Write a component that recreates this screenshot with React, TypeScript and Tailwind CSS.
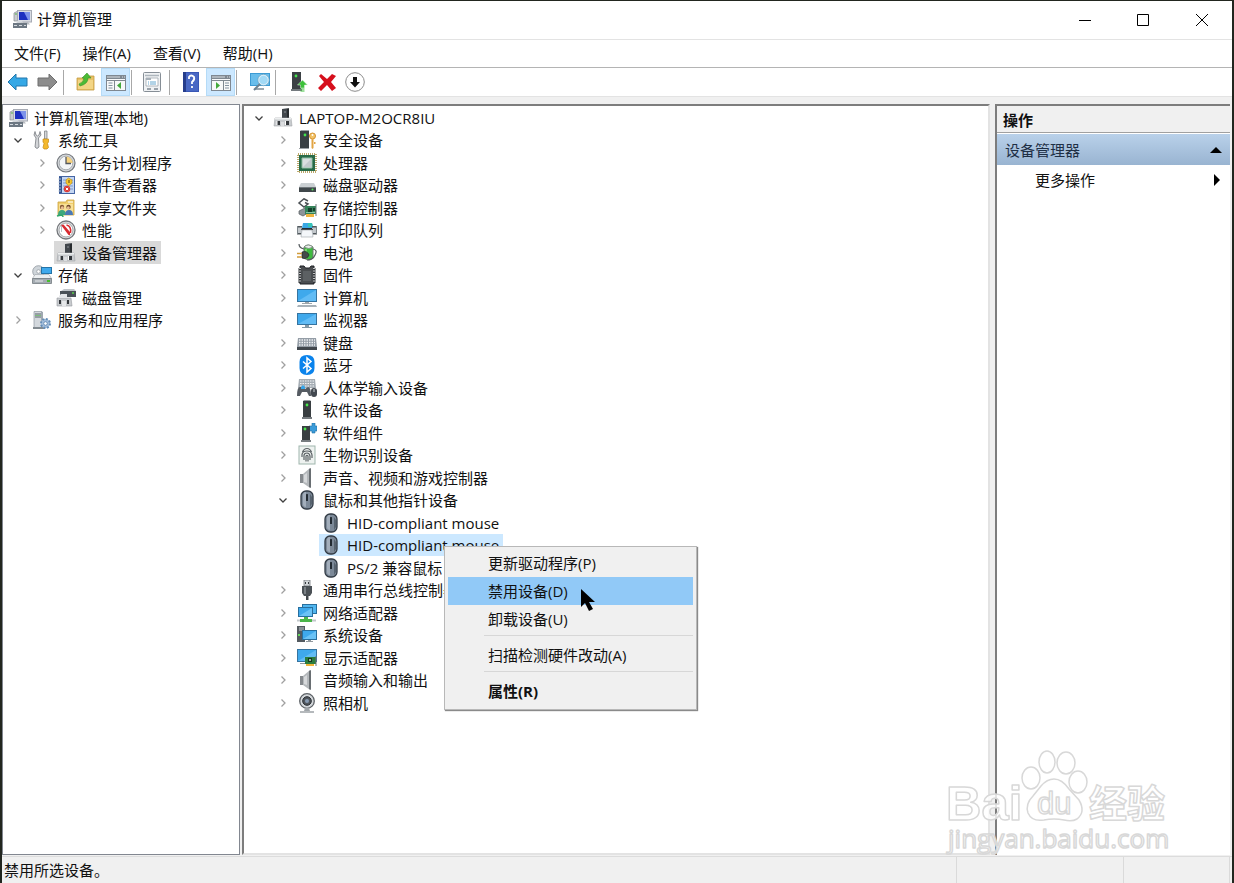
import React from "react";

type TreeNode = {
  label: string;
  icon: string;
  level: number;
  state?: "open" | "closed" | "leaf";
  selected?: "gray" | "blue";
};

const consoleTree: TreeNode[] = [
  { label: "计算机管理(本地)", icon: "console", level: 0 },
  { label: "系统工具", icon: "tools", level: 1, state: "open" },
  { label: "任务计划程序", icon: "clock", level: 2, state: "closed" },
  { label: "事件查看器", icon: "eventLog", level: 2, state: "closed" },
  { label: "共享文件夹", icon: "sharedFolder", level: 2, state: "closed" },
  { label: "性能", icon: "gauge", level: 2, state: "closed" },
  { label: "设备管理器", icon: "deviceManager", level: 2, state: "leaf", selected: "gray" },
  { label: "存储", icon: "storage", level: 1, state: "open" },
  { label: "磁盘管理", icon: "diskManagement", level: 2, state: "leaf" },
  { label: "服务和应用程序", icon: "services", level: 1, state: "closed" },
];

const deviceTree: TreeNode[] = [
  { label: "LAPTOP-M2OCR8IU", icon: "deviceManager", level: 1, state: "open" },
  { label: "安全设备", icon: "security", level: 2, state: "closed" },
  { label: "处理器", icon: "cpu", level: 2, state: "closed" },
  { label: "磁盘驱动器", icon: "disk", level: 2, state: "closed" },
  { label: "存储控制器", icon: "storageController", level: 2, state: "closed" },
  { label: "打印队列", icon: "printer", level: 2, state: "closed" },
  { label: "电池", icon: "battery", level: 2, state: "closed" },
  { label: "固件", icon: "firmware", level: 2, state: "closed" },
  { label: "计算机", icon: "computer", level: 2, state: "closed" },
  { label: "监视器", icon: "monitor", level: 2, state: "closed" },
  { label: "键盘", icon: "keyboard", level: 2, state: "closed" },
  { label: "蓝牙", icon: "bluetooth", level: 2, state: "closed" },
  { label: "人体学输入设备", icon: "hid", level: 2, state: "closed" },
  { label: "软件设备", icon: "software", level: 2, state: "closed" },
  { label: "软件组件", icon: "component", level: 2, state: "closed" },
  { label: "生物识别设备", icon: "fingerprint", level: 2, state: "closed" },
  { label: "声音、视频和游戏控制器", icon: "speaker", level: 2, state: "closed" },
  { label: "鼠标和其他指针设备", icon: "mouse", level: 2, state: "open" },
  { label: "HID-compliant mouse", icon: "mouse", level: 3, state: "leaf" },
  { label: "HID-compliant mouse", icon: "mouse", level: 3, state: "leaf", selected: "blue" },
  { label: "PS/2 兼容鼠标", icon: "mouse", level: 3, state: "leaf" },
  { label: "通用串行总线控制器", icon: "usb", level: 2, state: "closed" },
  { label: "网络适配器", icon: "network", level: 2, state: "closed" },
  { label: "系统设备", icon: "system", level: 2, state: "closed" },
  { label: "显示适配器", icon: "display", level: 2, state: "closed" },
  { label: "音频输入和输出", icon: "speaker", level: 2, state: "closed" },
  { label: "照相机", icon: "camera", level: 2, state: "closed" },
];

const screenBlue = "#3fa9ec";

const icons: Record<string, React.ReactNode> = {
  console: (
    <>
      <path d="M2 4l4-2v10H2z" fill="#c9ccd0" stroke="#85898e" strokeWidth=".7" />
      <path d="M3 5h2" stroke="#55b24a" />
      <rect x="5.500" y="1.500" width="14" height="11.500" fill="#d9dce3" stroke="#a7abb4" />
      <path d="M7 3h11v8H7z" fill="#1c2fc0" />
      <path d="M12 3h6v8h-2z" fill="#7d93ea" />
      <path d="M9 13h7l2 2.500H8z" fill="#b8bcc2" />
      <path d="M1 14h14v5H1z" fill="#6d7883" />
      <path d="M5 14v-1.500h5V14M2 16.500h3m2 0h3m2 0h2" stroke="#d5dadf" fill="none" />
    </>
  ),
  tools: (
    <>
      <path d="M3 1.500L2 5l2 3-1 9q2 3 4 0L6.500 8 9 5 8 1.500 7 5 5.500 6 4 5z" fill="#d3d5d8" stroke="#777b80" strokeWidth=".8" />
      <path d="M12.500 1h2.500v8h-2.500z" fill="#d5d7d9" stroke="#74777b" strokeWidth=".7" />
      <path d="M11 9h5.500v3l-1 1.500 1 4-1.500 1.500h-3l-1-1.500 1-4-1-1.500z" fill="#f4b92d" stroke="#c68a14" strokeWidth=".7" />
    </>
  ),
  clock: (
    <>
      <circle cx="10" cy="10" r="9" fill="#d4d7da" stroke="#73777c" strokeWidth="1.200" />
      <circle cx="10" cy="10" r="6.800" fill="#f4f6f8" stroke="#9aa0a5" strokeWidth=".8" />
      <path d="M10 10V3.500A6.500 6.500 0 0116.500 10z" fill="#f6d27e" />
      <path d="M10 4v6.500h5" stroke="#54585d" fill="none" strokeWidth="1.300" />
    </>
  ),
  eventLog: (
    <>
      <rect x="3.500" y="1.500" width="15" height="17" fill="#c4d6f2" stroke="#4565a4" />
      <path d="M3 2h3v16H3z" fill="#35558f" />
      <path d="M2 4h3M2 7h3M2 10h3M2 13h3M2 16h3" stroke="#cbd5e6" strokeWidth=".8" />
      <path d="M7 5h10M7 8h10M7 11h10M7 14h10" stroke="#7c99cf" />
      <path d="M12.500 3l3.500 2v3l-3.500 3L10 8V5z" fill="#f6c62e" stroke="#b98c16" strokeWidth=".6" />
      <path d="M13 5v3" stroke="#5a4710" />
      <circle cx="11" cy="14" r="3.200" fill="#dc3b36" />
      <path d="M9.800 12.800l2.400 2.400m0-2.400l-2.400 2.400" stroke="#fff" />
    </>
  ),
  sharedFolder: (
    <>
      <path d="M2 4h8l1-2h7v15H2z" fill="#f0ce6d" stroke="#cba23c" strokeWidth=".8" />
      <path d="M3 6h14v10H3z" fill="#f9e197" />
      <path d="M12 4h5" stroke="#fff" />
      <circle cx="6" cy="9" r="2.200" fill="#8a5a34" />
      <circle cx="6.300" cy="9.700" r="1.500" fill="#e8bd94" />
      <path d="M2 17q0-5 4-5t4 5z" fill="#3da87d" />
      <circle cx="12.500" cy="9" r="2.200" fill="#6c4427" />
      <circle cx="12.300" cy="9.700" r="1.500" fill="#e8bd94" />
      <path d="M9 17q0-5 4-5t4 5z" fill="#4a79b5" />
      <path d="M1 18q6-2 6 1" stroke="#2fa568" fill="none" strokeWidth="1.500" />
    </>
  ),
  gauge: (
    <>
      <circle cx="10" cy="10" r="9" fill="#e2e4e6" stroke="#74777b" strokeWidth="1.300" />
      <circle cx="10" cy="10" r="7" fill="#fff" stroke="#8e9296" strokeWidth=".8" />
      <path d="M5.500 12V6" fill="none" stroke="#b9bec3" />
      <path d="M5 5l2.500-.5L14 12v3h-1.500z" fill="#d82a30" />
      <path d="M10.500 5q5 1 4 8" stroke="#d82a30" strokeWidth="1.500" fill="none" />
    </>
  ),
  deviceManager: (
    <>
      <path d="M9 1l7-1v10H9z" fill="#42474c" />
      <path d="M14 1h2v9h-2z" fill="#272b2e" />
      <path d="M11 4h2" stroke="#8d9398" />
      <path d="M2 10h16l1 8H1z" fill="#c8cbce" stroke="#a2a6aa" strokeWidth=".6" />
      <path d="M2 10h16v1.500H2z" fill="#eceeef" />
      <path d="M4 13h3v4H4zm9 0h3v4h-3z" fill="#34383c" />
      <path d="M3.500 13h1v4h-1zm8.500 0h1v4h-1z" fill="#fff" />
      <path d="M8 14h3v4H8z" fill="#dcdee0" />
    </>
  ),
  storage: (
    <>
      <circle cx="6.500" cy="6.500" r="5.800" fill="#cfd5da" stroke="#8e969d" strokeWidth=".8" />
      <circle cx="6.500" cy="6.500" r="1.800" fill="#fff" stroke="#8e969d" strokeWidth=".7" />
      <rect x="9.500" y="2.500" width="10" height="6" fill={screenBlue} stroke="#2474a8" />
      <path d="M3 9.500h14l2.500 4H.5z" fill="#eceff1" stroke="#9da3a8" strokeWidth=".6" />
      <path d="M.5 13.500h19v5H.5z" fill="#a5acb2" stroke="#747b81" strokeWidth=".8" />
      <path d="M15 15h3v2h-3z" fill="#48bd2d" />
      <path d="M3 16h8" stroke="#e8ebed" />
    </>
  ),
  diskManagement: (
    <>
      <path d="M5 3l3-2h10l2 2z" fill="#bfc4c8" />
      <path d="M4 3h16v6H4z" fill="#4a5157" />
      <path d="M16 5h2" stroke="#58cf49" strokeWidth="1.500" />
      <path d="M1 10h14l1 8H1z" fill="#c8cbce" stroke="#95999d" strokeWidth=".6" />
      <path d="M3 12h2v4H3zm8 0h2v4h-2z" fill="#34383c" />
      <path d="M3 8l2-2h6v4H3z" fill="#e4e6e8" />
      <path d="M6 13h4v5H6z" fill="#e6e8ea" />
    </>
  ),
  services: (
    <>
      <path d="M2 1.500h8v16H2z" fill="#d3d8dd" stroke="#9199a0" strokeWidth=".7" />
      <path d="M9 2h2v16H9z" fill="#9fa8b0" />
      <path d="M3 4h6M3 7h6" stroke="#59626a" />
      <path d="M3 5.500h6" stroke="#58b252" strokeWidth=".7" />
      <path d="M1 18h11" stroke="#838b91" strokeWidth="2" />
      <circle cx="13.500" cy="13.500" r="4.500" fill="#a5bfdd" stroke="#658eb8" strokeWidth="2" strokeDasharray="2 1.500" />
      <circle cx="13.500" cy="13.500" r="1.800" fill="#fff" stroke="#557fa9" strokeWidth=".8" />
    </>
  ),
  security: (
    <>
      <path d="M3 1h9v17H3z" fill="#393f43" />
      <path d="M3 1l1-1h8v1zM2 18h10v1H2z" fill="#9ca1a5" />
      <circle cx="8" cy="5" r="1.400" fill="#43e44d" />
      <circle cx="15.500" cy="6" r="3" fill="#f3c468" stroke="#d59331" />
      <path d="M14.500 9h2v9l-1 1-1-1zM17 12h1.500v2H17z" fill="#e2a544" />
      <circle cx="15.500" cy="5" r=".9" fill="#fff" />
    </>
  ),
  cpu: (
    <>
      <rect x="1" y="1" width="18" height="18" fill="none" stroke="#a68d3d" strokeWidth="1.500" strokeDasharray="1 1" />
      <path d="M2 2h16v16H2z" fill="#286b48" />
      <path d="M5 5h10v10H5z" fill="#dadee0" stroke="#8ebba0" />
      <path d="M6 14L14 6v8z" fill="#c2c9cc" />
    </>
  ),
  disk: (
    <>
      <path d="M4 8h13l2 4H2z" fill="#cbd0d3" />
      <path d="M2 12h17v5H2z" fill="#40474b" />
      <path d="M2 12h17v1H2z" fill="#70777b" />
      <circle cx="15.500" cy="14.500" r="1" fill="#55e55b" />
    </>
  ),
  storageController: (
    <>
      <path d="M11 3L7 .8 2 5l5 4 4-3-3-1.500" stroke="#4b5054" strokeWidth="1.500" fill="none" />
      <path d="M2 13l6-3 3 5-5 3-4-2z" fill="#8d9499" stroke="#54595d" strokeWidth=".7" />
      <path d="M8 8h11v8H8z" fill="#35845a" />
      <path d="M11 10h4v4h-4zm5 0h2v3h-2z" fill="#163f2c" />
      <path d="M9 14.500h9" stroke="#8ac4a4" />
      <path d="M9 16h8v3H9z" fill="#efb540" />
      <path d="M19 6v12" stroke="#717a7f" />
    </>
  ),
  printer: (
    <>
      <path d="M6 3h9l1 5H5z" fill="#39a7e4" />
      <path d="M11 3h4l1 4h-5z" fill="#37c3b7" />
      <path d="M1 6h4v3h11V6h3v8H1z" fill="#c3c8cc" />
      <path d="M0 6h5v1.500H0zm15 0h5v1.500h-5zM0 13h4v1.500H0zm16 0h4v1.500h-4z" fill="#51585d" />
      <path d="M0 6h1v8H0zm19 0h1v8h-1z" fill="#7d858a" />
      <path d="M4 10h12l-1-2H5z" fill="#252b2f" />
      <path d="M5 10h10l1 7H4z" fill="#f4f7fa" stroke="#9da5aa" strokeWidth=".6" />
    </>
  ),
  battery: (
    <>
      <path d="M7 4q4-4 9 0v11q-4 4-9 0z" fill="#3eba3f" stroke="#6f7b72" />
      <path d="M7 4q4-4 9 0-4 3-9 0" fill="#e9eeeb" stroke="#6f7b72" strokeWidth=".7" />
      <path d="M9 6v10" stroke="#b5ef9e" />
      <path d="M2 1q0 4 5 5M16 6q5 1 2 6-2 5-8 5" stroke="#555b5e" strokeWidth="1.200" fill="none" />
      <path d="M5 9q5-2 7 3-2 5-7 3z" fill="#454a4a" stroke="#232626" strokeWidth=".7" />
      <path d="M0 10.500h5M0 14h5" stroke="#d19c3b" strokeWidth="1.700" />
    </>
  ),
  firmware: (
    <>
      <path d="M3 1h4l1.500 2h4L14 1h3v18H3z" fill="#4a4d50" stroke="#202326" strokeWidth="1" />
      <path d="M2.500 3v15M17.500 3v15" stroke="#33373a" strokeWidth="2" />
      <path d="M3 3v15M17 3v15" stroke="#f3f3f3" strokeWidth="1.500" strokeDasharray="1 1.500" />
      <path d="M6 6h8v10H6z" fill="#5c6063" />
    </>
  ),
  computer: (
    <>
      <rect x=".5" y="1.500" width="19" height="12" fill={screenBlue} stroke="#3674a0" />
      <path d="M1 13L19 2v11z" fill="#62bcf5" />
      <path d="M8 14h4v1h3v1H5v-1h3z" fill="#a0a7ab" />
      <path d="M1 17h18l1 2H0z" fill="#a8b2b9" />
    </>
  ),
  monitor: (
    <>
      <rect x=".5" y="3.500" width="19" height="11" fill={screenBlue} stroke="#3674a0" />
      <path d="M1 14L19 4v10z" fill="#62bcf5" />
      <path d="M8 15h4v2h3v1H5v-1h3z" fill="#8499a6" />
    </>
  ),
  keyboard: (
    <>
      <path d="M1 5h18l1 9H0z" fill="#949da6" />
      <path d="M2 7h16M2 9.500h16M2 12h16" stroke="#edf0f3" strokeWidth="1.300" strokeDasharray="1.500 1" />
      <path d="M0 14h20v3H0z" fill="#41474d" />
    </>
  ),
  bluetooth: (
    <>
      <path d="M10 0q7.500 0 7.500 7v6q0 7-7.500 7t-7.500-7V7q0-7 7.500-7" fill="#0a83ec" />
      <path d="M6 6.500l8 7-4 3.500V3l4 3.500-8 7" stroke="#fff" strokeWidth="1.500" fill="none" />
    </>
  ),
  hid: (
    <>
      <path d="M2 1h16l1 9H1z" fill="#a5adb4" />
      <path d="M3 3h14M3 5.500h14M3 8h14" stroke="#f0f2f4" strokeDasharray="1.500 1" />
      <path d="M0 18q0-9 3-9h3l2 2 3-2q3 0 3 9h-2l-2-4H5l-2 4z" fill="#555b62" />
      <path d="M4 9l2-2 2 2v2H4z" fill="#37a5e8" />
      <rect x="14" y="10" width="6" height="9" rx="3" fill="#42484f" />
      <path d="M17 11v3" stroke="#cbd2d8" />
    </>
  ),
  software: (
    <>
      <path d="M6 1h8v16H6z" fill="#393e41" />
      <path d="M5 17h10v2H5z" fill="#777c80" />
      <path d="M6 1l1-1h6l1 1z" fill="#969b9d" />
      <circle cx="10" cy="5" r="1.400" fill="#48e84c" />
    </>
  ),
  component: (
    <>
      <path d="M12 3h3V0h3v3h2v5h-2v2h-3V8h-3z" fill="#3b9bd9" stroke="#2472a6" strokeWidth=".6" />
      <path d="M5 3h8v14H5z" fill="#393e41" />
      <path d="M4 17h10v2H4z" fill="#777c80" />
      <circle cx="8" cy="6" r="1.400" fill="#48e84c" />
    </>
  ),
  fingerprint: (
    <>
      <rect x="2" y="1" width="16" height="18" fill="#eef2f0" stroke="#9fb6ad" />
      <path
        d="M5.500 7Q7 3.500 10 3.500T14.500 7M5 12V9.500Q5.500 6 10 6t5 4v3M7 15V10q.5-2 3-2t3 3v4M9 16.500V11q1-1.500 2 0v5.500"
        fill="none"
        stroke="#595f63"
        strokeWidth="1.200"
      />
    </>
  ),
  speaker: (
    <>
      <path d="M3 6h4v9H3z" fill="#85898d" />
      <path d="M6 6l7-6v20l-7-5z" fill="#b4b8bb" />
      <path d="M12 1l2-1v20l-2-1z" fill="#696e72" />
      <path d="M7 7l3-2v10l-3-1z" fill="#d7d9db" />
    </>
  ),
  mouse: (
    <>
      <rect x="4" y="1" width="12" height="18" rx="5" fill="#7c8998" stroke="#323b45" strokeWidth="1.300" />
      <path d="M6 5q0-3 3-3v15q-3 0-3-3z" fill="#a3aebb" />
      <path d="M13 4l2 3v7l-2 3z" fill="#57636f" />
      <rect x="9" y="4" width="2" height="7" rx=".5" fill="#222a32" />
    </>
  ),
  usb: (
    <>
      <path d="M7 0h6v6H7z" fill="#d2d6d9" stroke="#74797e" strokeWidth=".8" />
      <path d="M8.500 2v2M11.500 2v2" stroke="#373c40" />
      <path d="M5 6h10v7l-2 3H7l-2-3z" fill="#4b5156" />
      <path d="M7 7h2v7H7z" fill="#7b8186" />
      <path d="M9 16h2.500v4H9z" fill="#43484c" />
    </>
  ),
  network: (
    <>
      <rect x="5.500" y="1.500" width="14" height="9" fill="#51b6ef" stroke="#286f9e" />
      <rect x="1.500" y="4.500" width="14" height="9" fill={screenBlue} stroke="#286f9e" />
      <path d="M2 13l13-8v8z" fill="#6bc3f6" />
      <path d="M7 14h4v2h4v3H3v-3h4z" fill="#4bb64a" />
      <path d="M0 17.500h3m12 0h4" stroke="#c2c8cb" strokeWidth="2" />
    </>
  ),
  system: (
    <>
      <path d="M0 1h8v16H0z" fill="#535a60" />
      <path d="M2 3h5M2 5h5" stroke="#c0c5c9" />
      <path d="M1 9h2v2H1z" fill="#64d75a" />
      <rect x="5.500" y="5.500" width="14" height="9" fill={screenBlue} stroke="#286f9e" />
      <path d="M6 14l13-8v8z" fill="#6bc3f6" />
      <path d="M11 15h3v1h2v1H9v-1h2z" fill="#90989d" />
    </>
  ),
  display: (
    <>
      <rect x=".5" y="1.500" width="19" height="12" fill={screenBlue} stroke="#3674a0" />
      <path d="M1 13L19 2v11z" fill="#62bcf5" />
      <path d="M3 15h5v1H3z" fill="#939b9f" />
      <path d="M8 9h11v7H8z" fill="#2b7d3e" />
      <path d="M11 10h4v4h-4z" fill="#16391e" />
      <path d="M12 11h2v2h-2z" fill="#96b89b" />
      <path d="M9 16h8v2H9z" fill="#f0b438" />
      <path d="M19 8v10" stroke="#687276" />
    </>
  ),
  camera: (
    <>
      <circle cx="10" cy="8" r="7.300" fill="#d3d7da" stroke="#5d6266" strokeWidth="1.300" />
      <circle cx="10" cy="8" r="4.300" fill="#50565c" stroke="#292e33" />
      <circle cx="10" cy="8" r="2" fill="#869ab2" />
      <path d="M8 15h4l1 3H7z" fill="#a0a5a9" />
      <path d="M3 19h14" stroke="#9da2a6" strokeWidth="1.500" />
    </>
  ),
  back: <path d="M0 10l8-8v4h11v8H8v4z" fill="#35a8e6" stroke="#2277ac" />,
  forward: <path d="M20 10l-8-8v4H1v8h11v4z" fill="#8d8d8d" stroke="#6e6e6e" />,
  folderUp: (
    <>
      <path d="M1 6h7l2-2h8v14H1z" fill="#e8c267" stroke="#c49b3f" strokeWidth=".8" />
      <path d="M2 8h15v9H2z" fill="#f3d585" />
      <path d="M3 12q5-2 5-6H6l5-5 4 5h-3q0 6-8 8z" fill="#4cbb35" stroke="#36912a" strokeWidth=".6" />
    </>
  ),
  treePane: (
    <>
      <path d="M0 3h20v16H0z" fill="#7f8891" />
      <path d="M1 7h18v11H1z" fill="#f7f8f9" />
      <path d="M1 5h13m2 0h1m1 0h1" stroke="#dce1e6" />
      <path d="M1 8.500h18M8.500 9v9" stroke="#7f8891" />
      <path d="M2.500 11h4M2.500 13.500h4M2.500 16h4" stroke="#8492a0" />
      <path d="M15 10v7l-4-3.500z" fill="#43a83b" />
    </>
  ),
  actionPane: (
    <>
      <path d="M0 3h20v16H0z" fill="#7f8891" />
      <path d="M1 7h18v11H1z" fill="#f7f8f9" />
      <path d="M1 5h13m2 0h1m1 0h1" stroke="#dce1e6" />
      <path d="M1 8.500h18M12.500 9v9" stroke="#7f8891" />
      <path d="M14 11h4M14 13.500h4M14 16h4" stroke="#8492a0" />
      <path d="M5 10v7l4-3.500z" fill="#43a83b" />
    </>
  ),
  properties: (
    <>
      <rect x="1.500" y=".5" width="17" height="19" rx="1" fill="#f0f2f4" stroke="#868e96" />
      <path d="M3 3.500h14" stroke="#aeb6bd" strokeWidth="1.500" />
      <path d="M4 6h12v8H4z" fill="#fff" stroke="#9fa7af" strokeWidth=".8" />
      <path d="M4 6h5v2H4z" fill="#a7b0b8" />
      <path d="M6 10h1m1 0h6M6 12h1m1 0h6" stroke="#66a8cf" />
      <path d="M5 17h4m3 0h4" stroke="#99a2aa" strokeWidth="2" />
    </>
  ),
  help: (
    <>
      <path d="M2 0h16v20H2z" fill="#3957b5" />
      <path d="M2 0h3v20H2z" fill="#263d8c" />
      <path d="M5 1h12v18H5z" fill="#4968c4" />
      <path d="M8 7V5q2-3 5 0 1 3-2 5v2M11 14v2" stroke="#fff" strokeWidth="1.800" fill="none" />
    </>
  ),
  scan: (
    <>
      <path d="M0 1h20v13H0z" fill="#3c9bd4" />
      <path d="M1 2h18v11H1z" fill="#68bdeb" />
      <path d="M6 16h8v2H4v-1z" fill="#9da8b0" />
      <circle cx="13.500" cy="8" r="5" fill="#a2d9f5" stroke="#d8eefa" strokeWidth="1.500" />
      <circle cx="13.500" cy="8" r="5.700" fill="none" stroke="#5b96b7" strokeWidth=".6" />
      <path d="M10 12l-6 6" stroke="#6d8291" strokeWidth="2" />
    </>
  ),
  updateDriver: (
    <>
      <path d="M3 0h9v17H3z" fill="#3b4044" />
      <path d="M2 17h11v2H2z" fill="#747a7e" />
      <circle cx="7" cy="4" r="1.400" fill="#43e44d" />
      <path d="M13.500 8l5 5h-3v3h-4v-3h-3z" fill="#3dc03a" stroke="#e6f7e4" strokeWidth=".5" />
      <path d="M11.500 17h4m-4 2h4" stroke="#3dc03a" strokeWidth="1.200" />
    </>
  ),
  remove: <path d="M4 2l6 5 5-5 4 2-5 6 5 6-4 3-5-6-6 6-3-3 6-6-5-6z" fill="#d60f1c" />,
  disable: (
    <>
      <circle cx="10" cy="10" r="9.300" fill="#fff" stroke="#8b8b8b" />
      <path d="M8 5h4v5h3l-5 5.500L5 10h3z" fill="#111" />
    </>
  ),
};

const indent: Record<number, string> = {
  0: "pl-[3px]",
  1: "pl-[9px]",
  2: "pl-[33px]",
  3: "pl-[57px]",
};

const selection = {
  gray: "bg-[#d9d9d9]",
  blue: "bg-[#cce8ff]",
};

function Icon({ name }: { name: string }) {
  return (
    <svg viewBox="0 0 20 20" className="size-5 shrink-0" aria-hidden="true">
      {icons[name]}
    </svg>
  );
}

function Chevron({ open }: { open: boolean }) {
  return (
    <button aria-label={open ? "折叠" : "展开"} className="w-3 shrink-0">
      <svg viewBox="0 0 12 12" className="size-3" fill="none">
        {open ? (
          <path d="M2.500 4.500L6 8l3.500-3.500" stroke="#404040" strokeWidth="1.300" />
        ) : (
          <path d="M4.500 2.500L8 6 4.500 9.500" stroke="#a0a0a0" strokeWidth="1.300" />
        )}
      </svg>
    </button>
  );
}

function Tree({ nodes, label }: { nodes: TreeNode[]; label: string }) {
  return (
    <ul role="tree" aria-label={label}>
      {nodes.map((node, i) => (
        <li
          key={i}
          role="treeitem"
          aria-selected={!!node.selected}
          className={`flex items-center gap-1.5 odd:h-[23px] even:h-[22px] ${indent[node.level]}`}
        >
          {node.state === "leaf" && <span className="w-3 shrink-0" />}
          {(node.state === "open" || node.state === "closed") && (
            <Chevron open={node.state === "open"} />
          )}
          <span
            className={`flex h-full items-center gap-1.5 whitespace-nowrap pl-0.5 pr-1 ${
              node.selected ? selection[node.selected] : ""
            }`}
          >
            <Icon name={node.icon} />
            {node.label}
          </span>
        </li>
      ))}
    </ul>
  );
}

function ToolButton({ icon, label, active }: { icon: string; label: string; active?: boolean }) {
  return (
    <button
      aria-label={label}
      aria-pressed={active}
      className={`flex h-7 items-center justify-center ${
        active ? "w-[29px] border border-[#b5dbf7] bg-[#cce8ff]" : "w-7"
      }`}
    >
      <Icon name={icon} />
    </button>
  );
}

function Divider({ className }: { className: string }) {
  return <span className={`h-[25px] w-px bg-[#a8a8a8] ${className}`} />;
}

function TitleBar() {
  return (
    <header className="flex h-[39px] items-center justify-between border-b border-[#e3e3e3] bg-white pl-2.5 pr-px">
      <h1 className="flex items-center gap-[5px] pb-0.5">
        <Icon name="console" />
        计算机管理
      </h1>
      <div className="flex h-full">
        <button aria-label="最小化" className="flex w-[58px] items-center justify-center">
          <svg viewBox="0 0 12 12" className="size-3" stroke="#000" fill="none">
            <path d="M0 6.500h12" />
          </svg>
        </button>
        <button aria-label="最大化" className="flex w-[58px] items-center justify-center">
          <svg viewBox="0 0 12 12" className="size-3" stroke="#000" fill="none">
            <path d="M.5 .5h11v11H.5z" />
          </svg>
        </button>
        <button aria-label="关闭" className="flex w-[59px] items-center justify-center">
          <svg viewBox="0 0 12 12" className="size-3" stroke="#000" fill="none">
            <path d="M0 0l12 12M12 0L0 12" />
          </svg>
        </button>
      </div>
    </header>
  );
}

function Toolbar() {
  return (
    <div role="toolbar" className="flex h-[29px] items-center gap-px border-b border-[#e3e3e3] bg-white pl-0.5">
      <ToolButton icon="back" label="后退" />
      <ToolButton icon="forward" label="前进" />
      <Divider className="ml-px mr-[7px]" />
      <ToolButton icon="folderUp" label="上移一级" />
      <ToolButton icon="treePane" label="显示/隐藏控制台树" active />
      <Divider className="mr-[5px]" />
      <ToolButton icon="properties" label="属性" />
      <Divider className="ml-0.5 mr-1.5" />
      <ToolButton icon="help" label="帮助" />
      <ToolButton icon="actionPane" label="显示/隐藏操作窗格" active />
      <Divider className="mr-2" />
      <ToolButton icon="scan" label="扫描检测硬件改动" />
      <Divider className="mr-2" />
      <div className="flex">
        <ToolButton icon="updateDriver" label="更新驱动程序" />
        <ToolButton icon="remove" label="卸载设备" />
        <ToolButton icon="disable" label="禁用设备" />
      </div>
    </div>
  );
}

function ActionsPane() {
  return (
    <aside className="w-[235px] shrink-0 border-l-2 border-t-2 border-[#7d7d7d] bg-white">
      <h2 className="h-[27px] border-b border-[#a0a0a0] bg-[#f0f0f0] pl-1.5 font-bold leading-7">操作</h2>
      <button className="mt-px flex h-[31px] w-full items-center justify-between bg-gradient-to-b from-[#b9d1ea] to-[#99b4d1] px-2 text-[#1e2f45]">
        设备管理器
        <svg viewBox="0 0 12 6" className="h-1.5 w-3">
          <path d="M0 6l6-6 6 6z" fill="#000" />
        </svg>
      </button>
      <button className="flex h-[30px] w-full items-center justify-between pl-[38px] pr-2.5">
        更多操作
        <svg viewBox="0 0 6 12" className="h-3 w-1.5">
          <path d="M0 0l6 6-6 6z" fill="#000" />
        </svg>
      </button>
    </aside>
  );
}

function MenuItem({ children, className = "" }: { children: React.ReactNode; className?: string }) {
  return (
    <button role="menuitem" className={`flex h-7 w-full items-center pl-10 ${className}`}>
      {children}
    </button>
  );
}

function ContextMenu() {
  return (
    <div
      role="menu"
      className="absolute left-[444px] top-[546px] w-[253px] border border-[#b8b8b8] bg-[#f0f0f0] pb-1 pl-[3px] pr-[3px] pt-0.5 shadow-[1px_1px_1px_#8a8a8a]"
    >
      <MenuItem>更新驱动程序(P)</MenuItem>
      <MenuItem className="bg-[#91c9f7]">禁用设备(D)</MenuItem>
      <MenuItem>卸载设备(U)</MenuItem>
      <hr className="mb-[5px] ml-9 mt-0.5 border-[#d7d7d7]" />
      <MenuItem>扫描检测硬件改动(A)</MenuItem>
      <hr className="mb-[5px] ml-9 mt-0.5 border-[#d7d7d7]" />
      <MenuItem className="font-bold">属性(R)</MenuItem>
    </div>
  );
}

function Watermark() {
  return (
    <svg
      viewBox="0 0 230 112"
      className="pointer-events-none absolute bottom-[25px] right-[62px] h-[112px] w-[230px]"
      fill="#fff"
      fillOpacity=".8"
      stroke="#d8d8d8"
      strokeWidth="1.500"
      strokeLinejoin="round"
    >
      <text x="4" y="74" className="font-['Liberation_Sans',sans-serif] text-[49px] font-bold">
        Bai
      </text>
      <ellipse cx="89" cy="32" rx="9" ry="11" />
      <ellipse cx="105" cy="16" rx="8" ry="11" />
      <ellipse cx="124" cy="17" rx="9" ry="11" />
      <ellipse cx="136" cy="36" rx="9" ry="11" />
      <path d="M112 33q8 0 15 10l10 11q7 12-2 19-5 3-13 1-10-2-20 0-12 2-16-7-3-9 5-17l8-10q6-7 13-7z" />
      <text x="95" y="68" className="font-['Liberation_Sans',sans-serif] text-[31px]">
        du
      </text>
      <text x="147" y="71" className="font-['Noto_Sans_CJK_SC',sans-serif] text-[38px] font-bold">
        经验
      </text>
      <text x="6" y="102" className="font-['Open_Sans',sans-serif] text-[26px]">
        jingyan.baidu.com
      </text>
    </svg>
  );
}

export default function App() {
  return (
    <div className="relative flex h-screen flex-col overflow-hidden bg-[#22261f] px-0.5 pt-px font-['Open_Sans','Noto_Sans_CJK_SC',sans-serif] text-[15px] leading-5 text-[#111]">
      <TitleBar />
      <nav className="flex h-7 items-center gap-[22px] border-b border-[#b4b4b4] bg-white pb-0.5 pl-3">
        <button>文件(F)</button>
        <button>操作(A)</button>
        <button>查看(V)</button>
        <button>帮助(H)</button>
      </nav>
      <Toolbar />
      <main className="flex min-h-0 flex-1 bg-[#f0f0f0] pb-px pr-0.5 pt-[7px]">
        <section className="w-[238px] shrink-0 border border-[#828790] bg-white pt-px">
          <Tree nodes={consoleTree} label="控制台树" />
        </section>
        <section className="ml-0.5 mr-[5px] min-w-0 flex-1 border-2 border-b-[#e3e3e3] border-l-[#7d7d7d] border-r-[#e3e3e3] border-t-[#7d7d7d] bg-white">
          <Tree nodes={deviceTree} label="设备" />
        </section>
        <ActionsPane />
      </main>
      <footer className="flex h-[27px] items-center border-t border-[#dcdcdc] bg-[#f0f0f0] pl-0.5">
        <p className="flex-1">禁用所选设备。</p>
        <span className="h-full w-[167px] border-l border-[#dadada]" />
        <span className="h-full w-[107px] border-x border-[#dadada]" />
        <span className="w-0.5" />
      </footer>
      <ContextMenu />
      <svg viewBox="0 0 16 24" className="absolute left-[580px] top-[588px] h-6 w-4">
        <path d="M1 1v18l4-4 4 8 4-2-4-7h6z" fill="#000" />
      </svg>
      <Watermark />
    </div>
  );
}
